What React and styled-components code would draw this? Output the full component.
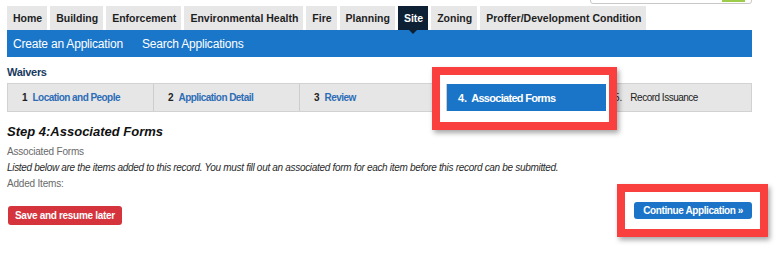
import styled, { createGlobalStyle } from 'styled-components';

const GlobalStyle = createGlobalStyle`
  body {
    margin: 0;
    background: #fff;
    font-family: "Liberation Sans", Arial, sans-serif;
  }
`;

const tabs = ['Home', 'Building', 'Enforcement', 'Environmental Health', 'Fire', 'Planning', 'Site', 'Zoning', 'Proffer/Development Condition'];

const steps = [
  { num: '1', label: 'Location and People' },
  { num: '2', label: 'Application Detail' },
  { num: '3', label: 'Review' },
  { num: '4.', label: 'Associated Forms', active: true },
  { num: '5.', label: 'Record Issuance', later: true },
];

const App = () => {
  return (
    <Page>
      <GlobalStyle />
      <TopStrip>
        <SearchBox>
          <SearchGo />
        </SearchBox>
      </TopStrip>

      <Tabs>
        {tabs.map((t) => (
          <Tab key={t} $active={t === 'Site'}>{t}</Tab>
        ))}
      </Tabs>

      <NavBar>
        <NavLink>Create an Application</NavLink>
        <NavLink>Search Applications</NavLink>
      </NavBar>

      <Module>Waivers</Module>

      <StepBar>
        {steps.map((s) => (
          <Step key={s.num} $active={s.active} $later={s.later}>
            <StepNum $active={s.active} $later={s.later}>{s.num}</StepNum>
            <StepLabel $active={s.active} $later={s.later}>{s.label}</StepLabel>
          </Step>
        ))}
      </StepBar>

      <Content>
        <Heading>Step 4:Associated Forms</Heading>
        <Muted>Associated Forms</Muted>
        <Instructions>Listed below are the items added to this record. You must fill out an associated form for each item before this record can be submitted.</Instructions>
        <Muted>Added Items:</Muted>
      </Content>

      <Actions>
        <SaveButton>Save and resume later</SaveButton>
        <ContinueButton>Continue Application »</ContinueButton>
      </Actions>

      <Callout $left={432} $top={67} $width={185} $height={63} $inner />
      <Callout $left={617} $top={184} $width={151} $height={53} />
    </Page>
  );
};

const Page = styled.div`
  position: relative;
  width: 745px;
  height: 254px;
  padding-left: 7px;
`;

const TopStrip = styled.div`
  height: 6px;
  display: flex;
  justify-content: flex-end;
  align-items: flex-end;
  padding: 0 0 2px 0;
  box-sizing: border-box;
  overflow: hidden;
`;

const SearchBox = styled.div`
  width: 162px;
  height: 20px;
  flex-shrink: 0;
  box-sizing: border-box;
  border: 1px solid #c8c8c8;
  border-radius: 3px;
  display: flex;
  justify-content: flex-end;
  padding: 0 6px 1px 0;
  background: #fff;
`;

const SearchGo = styled.div`
  width: 23px;
  background: #9ccc4a;
`;

const Tabs = styled.div`
  display: flex;
  gap: 3px;
  height: 24px;
`;

const Tab = styled.div`
  position: relative;
  display: flex;
  align-items: center;
  padding: 0 5px 0 6px;
  font-size: 10.5px;
  font-weight: bold;
  color: ${(p) => (p.$active ? '#fff' : '#1e1e1e')};
  background: ${(p) => (p.$active ? '#0e2134' : '#e7e7e7')};

  &::after {
    content: '';
    display: ${(p) => (p.$active ? 'block' : 'none')};
    position: absolute;
    top: 100%;
    left: 50%;
    margin-left: -4px;
    border-left: 4px solid transparent;
    border-right: 4px solid transparent;
    border-top: 4px solid #0e2134;
    z-index: 1;
  }
`;

const NavBar = styled.div`
  display: flex;
  align-items: center;
  gap: 19px;
  height: 27px;
  padding-left: 6px;
  background: #1a76c9;
`;

const NavLink = styled.span`
  color: #fff;
  font-size: 12px;
  letter-spacing: -0.2px;
`;

const Module = styled.div`
  padding-top: 8px;
  margin-bottom: 4px;
  line-height: 14px;
  font-size: 11px;
  font-weight: bold;
  letter-spacing: -0.3px;
  color: #173a5e;
`;

const StepBar = styled.div`
  display: grid;
  grid-template-columns: 146px 146px 147px 160px 1fr;
  height: 29px;
  box-sizing: border-box;
  border: 1px solid #d2d2d2;
  background: #e6e6e6;
`;

const Step = styled.div`
  display: flex;
  align-items: center;
  gap: ${(p) => (p.$later ? '8px' : p.$active ? '4px' : '5px')};
  padding-left: ${(p) => (p.$later ? '7px' : p.$active ? '11px' : '14px')};
  border-right: ${(p) => (p.$active || p.$later ? 'none' : '1px solid #cdcdcd')};
  background: ${(p) => (p.$active ? '#1a74c7' : 'transparent')};
`;

const StepNum = styled.span`
  font-size: ${(p) => (p.$active ? '11px' : '10px')};
  font-weight: ${(p) => (p.$later ? 'normal' : 'bold')};
  color: ${(p) => (p.$active ? '#fff' : '#222')};
`;

const StepLabel = styled.span`
  font-size: ${(p) => (p.$active ? '11px' : '10px')};
  font-weight: ${(p) => (p.$later ? 'normal' : 'bold')};
  letter-spacing: ${(p) => (p.$later ? '-0.5px' : p.$active ? '-0.7px' : '-0.55px')};
  color: ${(p) => (p.$active ? '#fff' : p.$later ? '#222' : '#2d6db6')};
`;

const Content = styled.div`
  padding-top: 12px;
`;

const Heading = styled.div`
  font-size: 13px;
  line-height: 16px;
  font-weight: bold;
  font-style: italic;
  color: #111;
  margin-bottom: 4px;
`;

const Muted = styled.div`
  font-size: 10px;
  line-height: 16px;
  letter-spacing: -0.2px;
  color: #6a6a6a;
`;

const Instructions = styled.div`
  font-size: 10px;
  line-height: 16px;
  font-style: italic;
  letter-spacing: -0.31px;
  color: #2a2a2a;
`;

const Actions = styled.div`
  display: flex;
  justify-content: space-between;
  align-items: flex-start;
  margin-top: 10px;
`;

const BaseButton = styled.button`
  border: none;
  border-radius: 3px;
  color: #fff;
  font-family: inherit;
  font-size: 10px;
  font-weight: bold;
  cursor: pointer;
`;

const SaveButton = styled(BaseButton)`
  margin-top: 4px;
  margin-left: 1px;
  height: 19px;
  padding: 0 7px;
  background: #d5343d;
  letter-spacing: -0.3px;
`;

const ContinueButton = styled(BaseButton)`
  height: 17px;
  padding: 0 9px;
  background: #1b74c8;
  letter-spacing: -0.4px;
`;

const Callout = styled.div`
  position: absolute;
  left: ${(p) => p.$left}px;
  top: ${(p) => p.$top}px;
  width: ${(p) => p.$width}px;
  height: ${(p) => p.$height}px;
  box-sizing: border-box;
  border: 8px solid #f9403f;
  box-shadow: 2px 3px 5px rgba(0, 0, 0, 0.35);
  pointer-events: none;

  &::before {
    content: '';
    display: ${(p) => (p.$inner ? 'block' : 'none')};
    position: absolute;
    inset: 0;
    box-sizing: border-box;
    border-style: solid;
    border-color: #fff;
    border-width: 9px 3px 11px 6px;
  }
`;

export default App;
